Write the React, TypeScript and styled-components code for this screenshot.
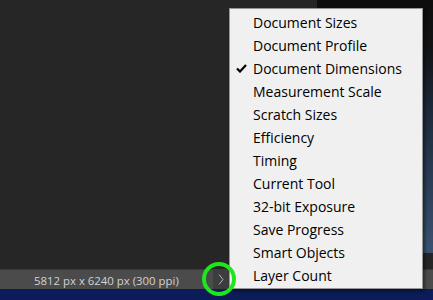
import styled, { createGlobalStyle } from "styled-components";

const GlobalStyle = createGlobalStyle`
  html, body {
    margin: 0;
    padding: 0;
    background: #262626;
    overflow: hidden;
  }
`;

const Screen = styled.div`
  position: relative;
  width: 433px;
  height: 300px;
  display: grid;
  grid-template-rows: 269px 20px 11px;
  font-family: "Open Sans", "Noto Sans", sans-serif;
`;

const Workspace = styled.div`
  display: flex;
  background: #262626;
`;

const Pasteboard = styled.div`
  flex: 0 0 317px;
`;

const Canvas = styled.div`
  flex: 1;
  height: 253px;
  background: linear-gradient(
    180deg,
    #0e0e0e 0%,
    #121416 20%,
    #1e2b3c 45%,
    #2c4058 75%,
    #3a5371 100%
  );
`;

const StatusBar = styled.div`
  display: flex;
  align-items: center;
  background: #4b4b4b;
  border-top: 1px solid #3a3a3a;
  box-sizing: border-box;
`;

const StatusInfo = styled.div`
  flex: 0 0 213px;
  box-sizing: border-box;
  padding: 1px 0 0 34px;
  font-size: 11.4px;
  color: #d2d2d2;
  white-space: nowrap;
`;

const StatusToggle = styled.div`
  width: 16px;
  height: 100%;
  display: flex;
  align-items: center;
  justify-content: center;
  background: #3d3d3d;
`;

const Taskbar = styled.div`
  background: #0c1c58;
`;

const Menu = styled.ul`
  position: absolute;
  left: 229px;
  top: 8px;
  width: 194px;
  height: 281px;
  box-sizing: border-box;
  margin: 0;
  padding: 2px 0 0;
  list-style: none;
  background: #f0f0f0;
  border: 1px solid #979797;
  box-shadow: 2px 2px 3px rgba(0, 0, 0, 0.45);
`;

const MenuItem = styled.li`
  display: grid;
  grid-template-columns: 23px 1fr;
  align-items: center;
  height: 23px;
  font-size: 14px;
  color: #000;
  white-space: nowrap;
`;

const CheckSlot = styled.span`
  display: flex;
  justify-content: center;
  align-items: center;
`;

const Highlight = styled.div`
  position: absolute;
  left: 202px;
  top: 262px;
  width: 34px;
  height: 34px;
  box-sizing: border-box;
  border: 4px solid #1ee61e;
  border-radius: 50%;
  pointer-events: none;
`;

const items = [
  "Document Sizes",
  "Document Profile",
  "Document Dimensions",
  "Measurement Scale",
  "Scratch Sizes",
  "Efficiency",
  "Timing",
  "Current Tool",
  "32-bit Exposure",
  "Save Progress",
  "Smart Objects",
  "Layer Count",
];

const checked = "Document Dimensions";

const Check = () => (
  <svg width="11" height="9" viewBox="0 0 11 9">
    <path d="M1 4.5 L4 7.5 L10 1" fill="none" stroke="#000" strokeWidth="2.2" />
  </svg>
);

const Chevron = () => (
  <svg width="6" height="11" viewBox="0 0 6 11">
    <path d="M1 0.5 L5 5.5 L1 10.5" fill="none" stroke="#b4b4b4" strokeWidth="1" />
  </svg>
);

export default function App() {
  return (
    <>
      <GlobalStyle />
      <Screen>
        <Workspace>
          <Pasteboard />
          <Canvas />
        </Workspace>
        <StatusBar>
          <StatusInfo>5812 px x 6240 px (300 ppi)</StatusInfo>
          <StatusToggle>
            <Chevron />
          </StatusToggle>
        </StatusBar>
        <Taskbar />
        <Menu>
          {items.map((label) => (
            <MenuItem key={label}>
              <CheckSlot>{label === checked && <Check />}</CheckSlot>
              <span>{label}</span>
            </MenuItem>
          ))}
        </Menu>
        <Highlight />
      </Screen>
    </>
  );
}
